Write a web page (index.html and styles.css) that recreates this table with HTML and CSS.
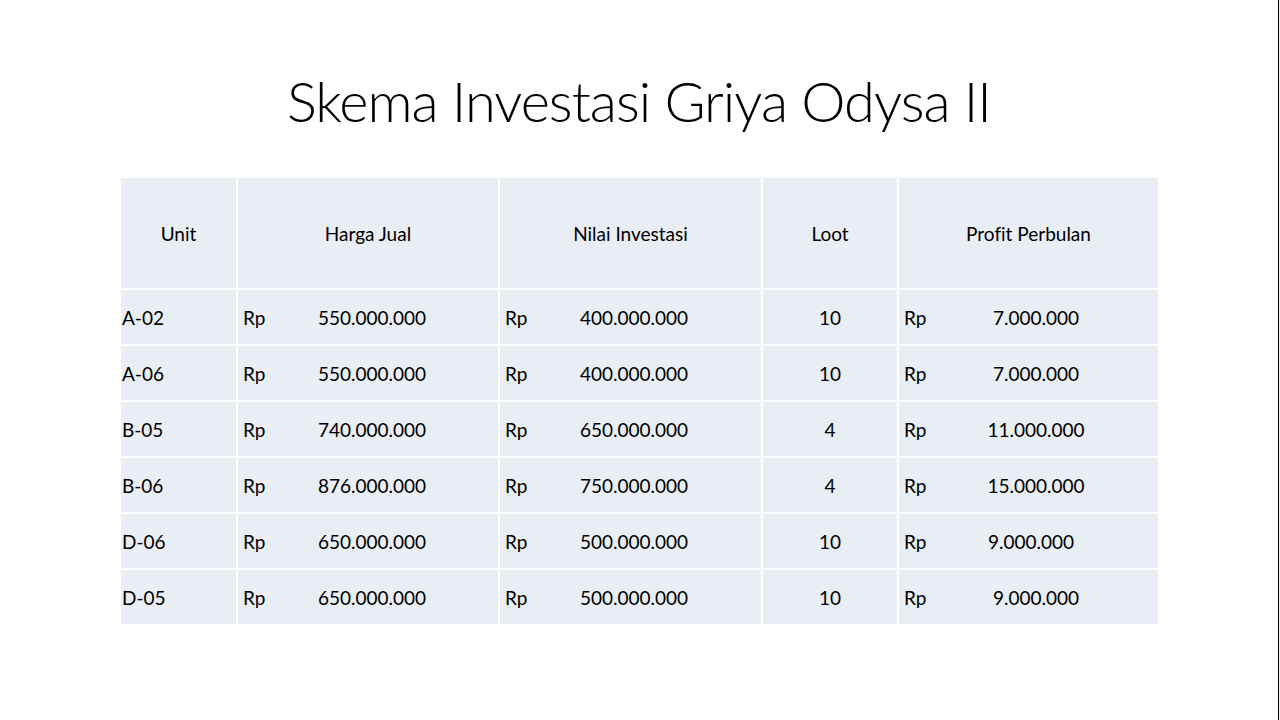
FILE: index.html
```html
<!DOCTYPE html>
<html lang="id">
<head>
<meta charset="utf-8">
<title>Skema Investasi Griya Odysa II</title>
<link rel="stylesheet" href="styles.css">
</head>
<body>
<div class="slide">
  <h1 class="title">Skema Investasi Griya Odysa II</h1>
  <div class="grid">
    <div class="cell head">Unit</div>
    <div class="cell head">Harga Jual</div>
    <div class="cell head">Nilai Investasi</div>
    <div class="cell head">Loot</div>
    <div class="cell head">Profit Perbulan</div>

    <div class="cell unit">A-02</div>
    <div class="cell money"><span class="rp">Rp</span><span class="num">550.000.000</span></div>
    <div class="cell money"><span class="rp">Rp</span><span class="num">400.000.000</span></div>
    <div class="cell loot">10</div>
    <div class="cell money profit"><span class="rp">Rp</span><span class="num">7.000.000</span></div>

    <div class="cell unit">A-06</div>
    <div class="cell money"><span class="rp">Rp</span><span class="num">550.000.000</span></div>
    <div class="cell money"><span class="rp">Rp</span><span class="num">400.000.000</span></div>
    <div class="cell loot">10</div>
    <div class="cell money profit"><span class="rp">Rp</span><span class="num">7.000.000</span></div>

    <div class="cell unit">B-05</div>
    <div class="cell money"><span class="rp">Rp</span><span class="num">740.000.000</span></div>
    <div class="cell money"><span class="rp">Rp</span><span class="num">650.000.000</span></div>
    <div class="cell loot">4</div>
    <div class="cell money profit"><span class="rp">Rp</span><span class="num">11.000.000</span></div>

    <div class="cell unit">B-06</div>
    <div class="cell money"><span class="rp">Rp</span><span class="num">876.000.000</span></div>
    <div class="cell money"><span class="rp">Rp</span><span class="num">750.000.000</span></div>
    <div class="cell loot">4</div>
    <div class="cell money profit"><span class="rp">Rp</span><span class="num">15.000.000</span></div>

    <div class="cell unit">D-06</div>
    <div class="cell money"><span class="rp">Rp</span><span class="num">650.000.000</span></div>
    <div class="cell money"><span class="rp">Rp</span><span class="num">500.000.000</span></div>
    <div class="cell loot">10</div>
    <div class="cell money profit"><span class="rp">Rp</span><span class="num num-shift">9.000.000</span></div>

    <div class="cell unit">D-05</div>
    <div class="cell money"><span class="rp">Rp</span><span class="num">650.000.000</span></div>
    <div class="cell money"><span class="rp">Rp</span><span class="num">500.000.000</span></div>
    <div class="cell loot">10</div>
    <div class="cell money profit"><span class="rp">Rp</span><span class="num">9.000.000</span></div>
  </div>
</div>
</body>
</html>
```

FILE: styles.css
```css
html, body {
  margin: 0;
  padding: 0;
  background: #f2f2f2;
}

body {
  width: 1280px;
  height: 720px;
  overflow: hidden;
  font-family: Lato, "Open Sans", "Liberation Sans", sans-serif;
  font-variant-ligatures: none;
  color: #000;
}

.slide {
  width: 1278px;
  height: 720px;
  background: #ffffff;
  border-right: 1px solid #000;
  box-sizing: content-box;
  display: flex;
  flex-direction: column;
  align-items: flex-start;
}

.title {
  margin: 65px 0 0 0;
  width: 100%;
  height: 72px;
  font-size: 56px;
  line-height: 72px;
  font-weight: 300;
  text-align: center;
  letter-spacing: -1px;
}

.grid {
  margin: 41px 0 0 121px;
  display: grid;
  grid-template-columns: 115px 260px 261px 134px 259px;
  grid-template-rows: 110px repeat(6, 54px);
  gap: 2px;
  background: #ffffff;
}

.cell {
  background: #e9edf4;
  font-size: 19px;
  display: flex;
  align-items: center;
  box-sizing: border-box;
}

.head {
  justify-content: center;
}

.unit {
  padding-left: 1px;
}

.loot {
  justify-content: center;
}

.money {
  display: grid;
  grid-template-columns: 31px 196px;
  padding-left: 5px;
  align-items: center;
}

.money.profit {
  grid-template-columns: 31px 202px;
}

.num {
  text-align: center;
}

.num-shift {
  padding-right: 10px;
}
```
